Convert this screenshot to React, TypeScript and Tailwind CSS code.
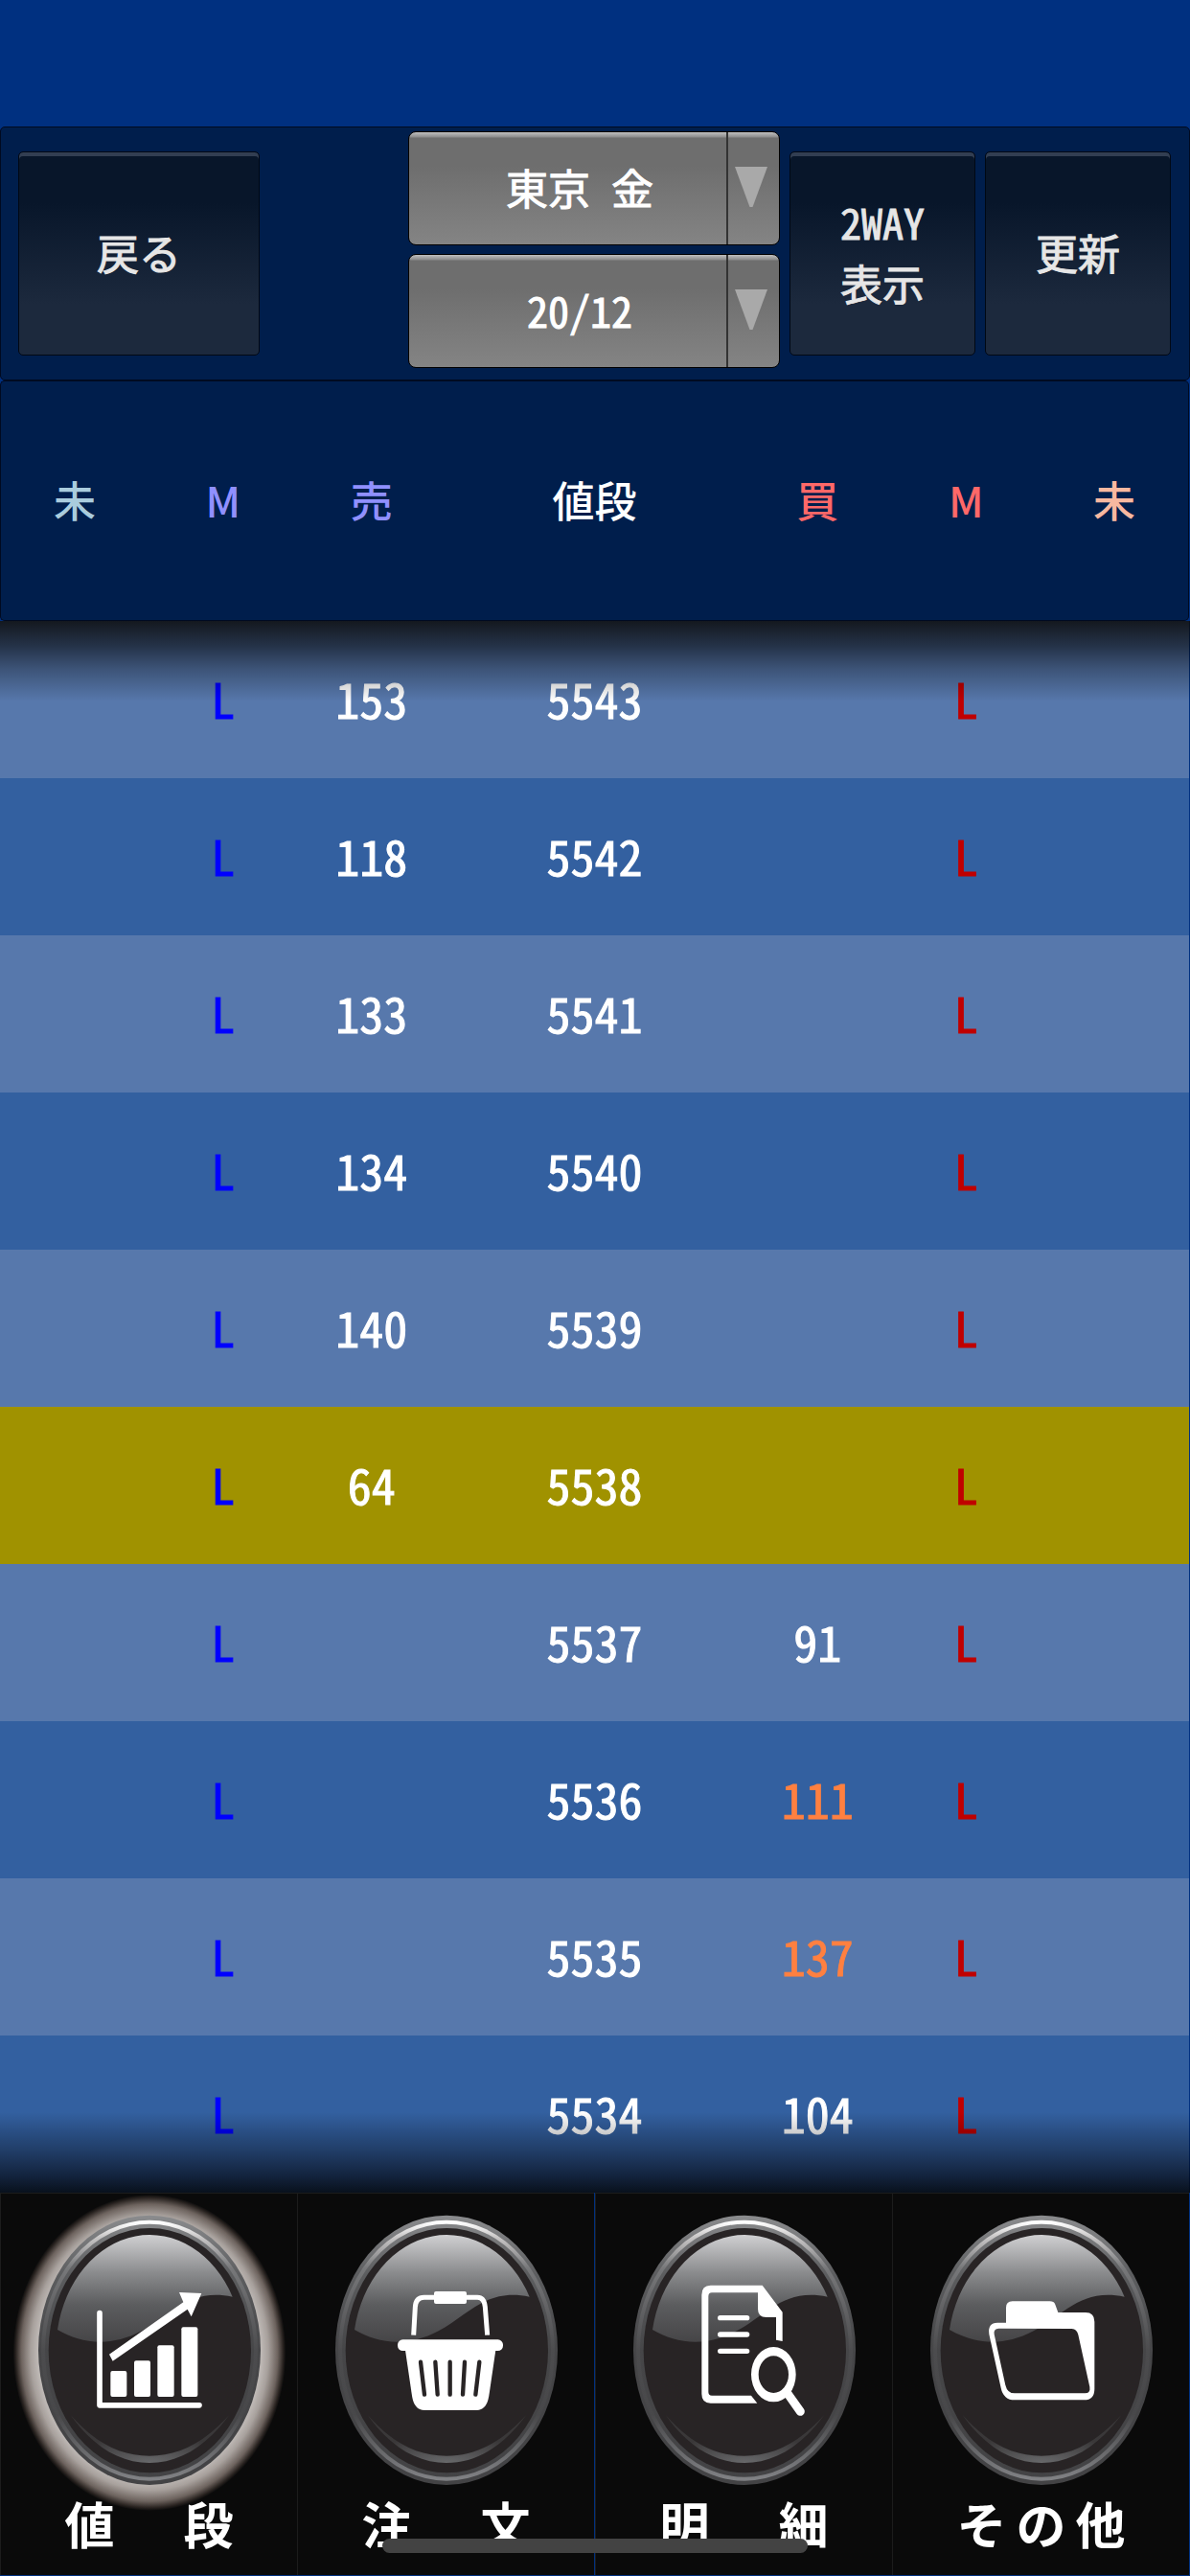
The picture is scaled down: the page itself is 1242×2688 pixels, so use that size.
import React from "react";

type Row = { sell?: string; price: string; buy?: string; hot?: boolean; last?: boolean };

const rows: Row[] = [
  { sell: "153", price: "5543" },
  { sell: "118", price: "5542" },
  { sell: "133", price: "5541" },
  { sell: "134", price: "5540" },
  { sell: "140", price: "5539" },
  { sell: "64", price: "5538", last: true },
  { price: "5537", buy: "91" },
  { price: "5536", buy: "111", hot: true },
  { price: "5535", buy: "137", hot: true },
  { price: "5534", buy: "104" },
];

const heads = [
  { label: "未", width: "w-[12.5%]", color: "text-[#aaccdd]" },
  { label: "M", width: "w-[12.5%]", color: "text-[#9090ff]" },
  { label: "売", width: "w-[12.5%]", color: "text-[#9090ff]" },
  { label: "値段", width: "w-[25%]", color: "text-white" },
  { label: "買", width: "w-[12.5%]", color: "text-[#ff6868]" },
  { label: "M", width: "w-[12.5%]", color: "text-[#ff6868]" },
  { label: "未", width: "w-[12.5%]", color: "text-[#f8b8a0]" },
];

function DarkButton({ children, className }: { children: React.ReactNode; className: string }) {
  return (
    <button
      type="button"
      className={`h-[213px] shrink-0 overflow-hidden rounded-[5px] border border-[#000814] bg-[linear-gradient(180deg,#08162a_25%,#1c293d_75%)] pb-1 text-[44px] leading-[64px] text-[#e6e6e6] shadow-[inset_0_4px_0_#323e52] [-webkit-text-stroke:1px] ${className}`}
    >
      {children}
    </button>
  );
}

function Picker({ label, value }: { label: string; value: string }) {
  return (
    <div className="relative h-[119px] w-full overflow-hidden rounded-[8px] border border-black bg-[linear-gradient(180deg,#c0c0c0_0px,#8c8c8c_5px,#6e6e6e_6px,#6e6e6e_30%,#848484_100%)]">
      <select
        aria-label={label}
        defaultValue={value}
        className="h-full w-full appearance-none bg-transparent pr-[30px] pb-1 text-center text-[44px] text-white outline-none [-webkit-text-stroke:1px] [text-align-last:center]"
      >
        <option>{value}</option>
      </select>
      <span className="pointer-events-none absolute inset-y-0 right-0 w-[55px] border-l-2 border-[#333]">
        <svg viewBox="0 0 34 42" className="mt-9 ml-[7px] h-[42px] w-[34px]" aria-hidden="true">
          <path d="M0 0H34L18.500 42H15.500Z" fill="#a9a9a9" />
        </svg>
      </span>
    </div>
  );
}

function ChartIcon() {
  return (
    <g fill="#fff">
      <path d="M309 431V719.500H621" fill="none" stroke="#fff" strokeWidth="17" strokeLinecap="round" strokeLinejoin="round" />
      <rect x="343" y="612" width="51" height="81" rx="6" />
      <rect x="417" y="580" width="51" height="113" rx="6" />
      <rect x="490" y="532" width="52" height="161" rx="6" />
      <rect x="565" y="475" width="51" height="218" rx="6" />
      <path d="M339 560L571 397L558 366L628 369L596 442L584 419L350 581Z" />
    </g>
  );
}

function BasketIcon() {
  return (
    <g fill="#fff">
      <path d="M362 500L367 412Q369 382 395 382H562Q583 382 586 412L593 500" fill="none" stroke="#fff" strokeWidth="15" />
      <rect x="426" y="363" width="102" height="39" rx="6" />
      <rect x="312" y="514" width="330" height="35" rx="16" />
      <path d="M335 540L357 690Q364 735 396 735H560Q591 735 598 690L620 540Z" />
      <path d="M384 584L396 686M430 584L437 686M476 584V686M522 584L516 686M568 584L556 686" stroke="#282425" strokeWidth="13" strokeLinecap="round" />
    </g>
  );
}

function DetailIcon() {
  return (
    <g fill="#fff" transform="translate(-3 0)">
      <path
        fillRule="evenodd"
        d="M362 344H524L587 428V519L567 515V444H536Q510 444 510 418V367H366Q355 367 355 379V678Q355 689 366 689H489L508 713H362Q334 713 334 684V374Q334 344 362 344Z"
      />
      <path d="M392 446H476M392 498H476M392 550H476" stroke="#fff" strokeWidth="16" strokeLinecap="round" />
      <path d="M604 684L643 739" stroke="#fff" strokeWidth="27" strokeLinecap="round" />
      <path fillRule="evenodd" d="M489 623A70 86 0 0 1 629 623A70 86 0 0 1 489 623ZM512 623A47 58 0 0 0 606 623A47 58 0 0 0 512 623Z" />
    </g>
  );
}

function FolderIcon() {
  return (
    <g fill="#fff" transform="translate(-27 0)">
      <path
        fillRule="evenodd"
        d="M381 461V414Q381 394 401 394H518Q531 394 535 404L544 429H630Q658 429 658 458V668Q658 703 625 703H408Q373 703 365 665L328 497Q323 461 354 461ZM358 479Q341 480 344 497L379 656Q385 682 408 682H628Q646 681 643 662L607 499Q603 481 587 480Z"
      />
    </g>
  );
}

function GlossyButton({ children, active }: { children: React.ReactNode; active?: boolean }) {
  return (
    <svg viewBox="0 57 930 960" className="h-80 w-[310px] overflow-visible" aria-hidden="true">
      {active && <ellipse cx="465" cy="555" rx="427" ry="495" fill="url(#halo)" />}
      <ellipse cx="465" cy="547" rx="348" ry="422" fill="url(#rim)" />
      <ellipse cx="465" cy="548" rx="333" ry="402" fill="none" stroke="url(#rimLine)" strokeWidth="12" />
      <ellipse cx="466" cy="548" rx="317" ry="383" fill="#282425" />
      <path d="M177 483A293 361 0 0 1 725 380C590 350 530 440 440 487C340 540 250 525 177 483Z" fill="url(#gloss)" />
      <path d="M218 750C290 852 375 900 465 900S640 852 715 750C635 838 555 878 465 878S295 838 218 750Z" fill="url(#crescent)" />
      {children}
    </svg>
  );
}

const tabs = [
  { label: "値　段", icon: <ChartIcon />, active: true },
  { label: "注　文", icon: <BasketIcon /> },
  { label: "明　細", icon: <DetailIcon /> },
  { label: "その他", icon: <FolderIcon /> },
];

function Gradients() {
  return (
    <svg className="absolute h-0 w-0" aria-hidden="true">
      <defs>
        <radialGradient id="halo">
          <stop offset="0.8" stopColor="#c6c1be" />
          <stop offset="0.87" stopColor="#a8a19d" />
          <stop offset="0.94" stopColor="#6d635e" />
          <stop offset="0.98" stopColor="#2a2421" />
          <stop offset="1" stopColor="#0a0a0a" />
        </radialGradient>
        <linearGradient id="rim" x1="0" y1="0" x2="0" y2="1">
          <stop offset="0" stopColor="#8b8c8e" />
          <stop offset="0.22" stopColor="#5c5d5f" />
          <stop offset="0.5" stopColor="#464648" />
          <stop offset="1" stopColor="#434345" />
        </linearGradient>
        <linearGradient id="rimLine" x1="0" y1="0" x2="0" y2="1">
          <stop offset="0" stopColor="#ffffff" />
          <stop offset="0.06" stopColor="#c8c6c6" />
          <stop offset="0.18" stopColor="#77787a" />
          <stop offset="0.5" stopColor="#4c4c4e" />
          <stop offset="0.75" stopColor="#48484a" />
          <stop offset="1" stopColor="#808184" />
        </linearGradient>
        <linearGradient id="gloss" x1="0" y1="0" x2="0" y2="1">
          <stop offset="0" stopColor="#d0d0d2" />
          <stop offset="0.35" stopColor="#8b8c8e" />
          <stop offset="0.65" stopColor="#5c5d5f" />
          <stop offset="1" stopColor="#464547" />
        </linearGradient>
        <radialGradient id="crescent" cx="0.5" cy="1" r="0.55">
          <stop offset="0" stopColor="#68696b" />
          <stop offset="1" stopColor="#3a3839" />
        </radialGradient>
      </defs>
    </svg>
  );
}

export default function App() {
  return (
    <div className="relative bg-[#003080] pt-33 pb-px font-['Noto_Sans_Mono_CJK_JP','Noto_Sans_CJK_JP',sans-serif]">
      <Gradients />
      <header className="flex h-[265px] items-center justify-between rounded-[5px] border border-[#000a20] bg-[#001e4c] pr-[19px] pl-[18px]">
        <DarkButton className="w-[252px]">戻る</DarkButton>
        <div className="flex items-center gap-[10px]">
          <div className="mb-2 flex w-[388px] flex-col gap-[9px]">
            <Picker label="銘柄" value="東京 金" />
            <Picker label="限月" value="20/12" />
          </div>
          <DarkButton className="w-[194px]">
            2WAY
            <br />
            表示
          </DarkButton>
          <DarkButton className="w-[194px]">更新</DarkButton>
        </div>
      </header>

      <main className="relative">
        <table className="w-full table-fixed border-separate border-spacing-0 pr-px text-center">
          <thead className="font-['Noto_Sans_CJK_JP',sans-serif]">
            <tr>
              {heads.map((h, i) => (
                <th
                  key={i}
                  scope="col"
                  className={`h-[251px] border-y border-[#000a20] bg-[#001e4c] p-0 pb-1 text-[44px] font-medium first:rounded-l-[5px] first:border-l last:rounded-r-[5px] last:border-r ${h.width} ${h.color}`}
                >
                  {h.label}
                </th>
              ))}
            </tr>
          </thead>
          <tbody className="text-[50px] leading-[64px] text-white [-webkit-text-stroke:1px]">
            {rows.map((r) => (
              <tr key={r.price} className={r.last ? "bg-[#a09200]" : "odd:bg-[#5778ac] even:bg-[#3360a0]"}>
                <td className="h-41 p-0" />
                <td className="p-0 pb-1 text-[#0000ff]">L</td>
                <td className="p-0 pb-1">{r.sell}</td>
                <td className="p-0 pb-1">{r.price}</td>
                <td className={r.hot ? "p-0 pb-1 text-[#ff8040]" : "p-0 pb-1"}>{r.buy}</td>
                <td className="p-0 pb-1 text-[#c00000]">L</td>
                <td className="p-0" />
              </tr>
            ))}
          </tbody>
        </table>
        <div className="pointer-events-none absolute inset-x-0 top-[251px] h-[84px] bg-[linear-gradient(180deg,rgba(10,10,10,0.87),rgba(0,0,0,0.58)_31%,rgba(0,0,0,0.3)_60%,rgba(0,0,0,0))]" />
        <div className="pointer-events-none absolute inset-x-0 bottom-0 h-[84px] bg-[linear-gradient(0deg,rgba(4,8,14,0.9),rgba(0,0,4,0.64)_20%,rgba(0,0,4,0.38)_50%,rgba(0,0,0,0))]" />
      </main>

      <nav className="grid grid-cols-2 gap-px pr-px">
        {[tabs.slice(0, 2), tabs.slice(2)].map((pair, i) => (
          <div key={i} className="grid grid-cols-2">
            {pair.map((t) => (
              <button
                key={t.label}
                type="button"
                aria-current={t.active ? "page" : undefined}
                className="flex h-[399px] flex-col items-center border-t border-l border-[#1c1c1c] bg-[#0a0a0a]"
              >
                <GlossyButton active={t.active}>{t.icon}</GlossyButton>
                <span className="relative w-44 text-[52px] leading-[48px] font-bold text-white [text-align-last:justify]">
                  {t.label}
                </span>
              </button>
            ))}
          </div>
        ))}
      </nav>
      <div className="absolute bottom-6 left-1/2 h-[15px] w-[444px] -translate-x-1/2 rounded-full bg-[#434343]" />
    </div>
  );
}
